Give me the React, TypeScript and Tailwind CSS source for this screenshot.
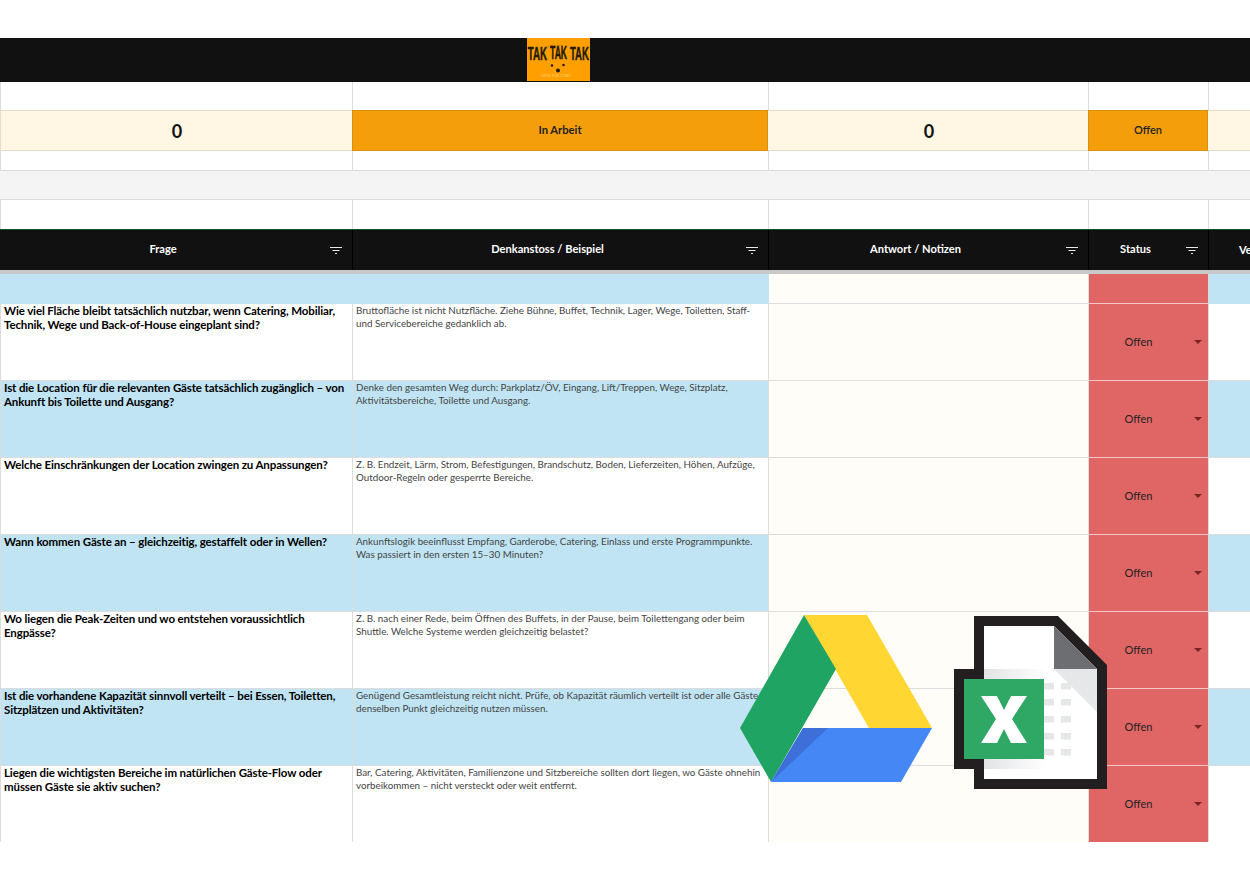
const rows = [
  ["Wie viel Fläche bleibt tatsächlich nutzbar, wenn Catering, Mobiliar, Technik, Wege und Back-of-House eingeplant sind?", "Bruttofläche ist nicht Nutzfläche. Ziehe Bühne, Buffet, Technik, Lager, Wege, Toiletten, Staff- und Servicebereiche gedanklich ab."],
  ["Ist die Location für die relevanten Gäste tatsächlich zugänglich – von Ankunft bis Toilette und Ausgang?", "Denke den gesamten Weg durch: Parkplatz/ÖV, Eingang, Lift/Treppen, Wege, Sitzplatz, Aktivitätsbereiche, Toilette und Ausgang."],
  ["Welche Einschränkungen der Location zwingen zu Anpassungen?", "Z. B. Endzeit, Lärm, Strom, Befestigungen, Brandschutz, Boden, Lieferzeiten, Höhen, Aufzüge, Outdoor-Regeln oder gesperrte Bereiche."],
  ["Wann kommen Gäste an – gleichzeitig, gestaffelt oder in Wellen?", "Ankunftslogik beeinflusst Empfang, Garderobe, Catering, Einlass und erste Programmpunkte. Was passiert in den ersten 15–30 Minuten?"],
  ["Wo liegen die Peak-Zeiten und wo entstehen voraussichtlich Engpässe?", "Z. B. nach einer Rede, beim Öffnen des Buffets, in der Pause, beim Toilettengang oder beim Shuttle. Welche Systeme werden gleichzeitig belastet?"],
  ["Ist die vorhandene Kapazität sinnvoll verteilt – bei Essen, Toiletten, Sitzplätzen und Aktivitäten?", "Genügend Gesamtleistung reicht nicht. Prüfe, ob Kapazität räumlich verteilt ist oder alle Gäste denselben Punkt gleichzeitig nutzen müssen."],
  ["Liegen die wichtigsten Bereiche im natürlichen Gäste-Flow oder müssen Gäste sie aktiv suchen?", "Bar, Catering, Aktivitäten, Familienzone und Sitzbereiche sollten dort liegen, wo Gäste ohnehin vorbeikommen – nicht versteckt oder weit entfernt."],
];

const cols = "grid grid-cols-[353px_416px_320px_120px_120px]";

function Blank({ h }: { h: string }) {
  return (
    <div className={`${cols} ${h}`}>
      <div className="border-r border-l border-[#dcdcdc]" />
      <div className="border-r border-[#dcdcdc]" />
      <div className="border-r border-[#dcdcdc]" />
      <div className="border-r border-[#dcdcdc]" />
      <div />
    </div>
  );
}

function FilterIcon() {
  return (
    <svg width="12" height="9" viewBox="0 0 12 9" className="absolute top-[16px] right-[10px]">
      <rect x="0" y="1" width="12" height="1" fill="#e8e8e8" />
      <rect x="2.5" y="4" width="7" height="1" fill="#e8e8e8" />
      <rect x="5" y="7" width="2" height="1" fill="#e8e8e8" />
    </svg>
  );
}

function Head({ label }: { label: string }) {
  return (
    <div className="relative flex items-center justify-center border-r border-black pr-[26px] pb-[2px] text-[11.1px] font-bold text-white">
      {label}
      <FilterIcon />
    </div>
  );
}

function Status() {
  return (
    <div className="relative flex items-center justify-center border-r border-b border-r-[#dcdcdc] border-b-[#f0c8c8] bg-[#e06666] pr-[20px] text-[11px] text-[#222]">
      Offen
      <span className="absolute top-[36px] right-[6px] h-0 w-0 border-x-[4px] border-t-[4px] border-x-transparent border-t-[#7a2525]" />
    </div>
  );
}

function Logo() {
  return (
    <svg viewBox="0 0 63 43" className="h-[43px] w-[63px] bg-[#ffa000]">
      <g fill="#231a00" stroke="#231a00" strokeWidth="0.5" fontFamily="'Liberation Sans', sans-serif" fontWeight="700" fontSize="18">
        <text transform="translate(0.7 22) scale(0.54 1)">TAK</text>
        <text transform="translate(23 20.5) scale(0.48 1)">TAK</text>
        <text transform="translate(43 22) scale(0.53 1)">TAK</text>
      </g>
      <text x="21" y="7.5" fontSize="2.4" fill="#6b4a00" fontFamily="'Liberation Sans', sans-serif">TAK TAK TAK</text>
      <circle cx="25" cy="27.5" r="1.3" fill="#231a00" />
      <circle cx="36.5" cy="27" r="1.3" fill="#231a00" />
      <circle cx="31" cy="32.5" r="2" fill="#231a00" />
      <text x="14" y="39" fontSize="3" fill="#ffd27a" fontFamily="'Liberation Sans', sans-serif">SWING PLAY ZONES</text>
    </svg>
  );
}

function DriveIcon() {
  return (
    <svg viewBox="0 0 192 168" className="h-[168px] w-[192px]">
      <polygon points="64,0 127,0 192,113 129,113" fill="#ffd632" />
      <polygon points="64,0 96,54 31,167 0,113" fill="#20a464" />
      <polygon points="63,113 192,113 161,167 31,167" fill="#4587f4" />
      <polygon points="63,113 88,113 31,167" fill="#3e6fd8" />
    </svg>
  );
}

function ExcelIcon() {
  return (
    <svg viewBox="0 0 154 174" className="h-[174px] w-[154px]">
      <defs>
        <linearGradient id="shade" x1="0" x2="1" y1="0" y2="0">
          <stop offset="0" stopColor="#e2e3e5" />
          <stop offset="1" stopColor="#ffffff" />
        </linearGradient>
      </defs>
      <polygon points="20,0 104,0 153,49 153,173 20,173 20,153 0,153 0,53 20,53" fill="#231f20" />
      <polygon points="30,10 100,10 143,53 143,163 30,163" fill="#ffffff" />
      <polygon points="100,10 143,53 100,53" fill="#6d6e71" />
      <polygon points="100,53 143,53 143,96" fill="#e6e7e9" />
      <rect x="30" y="53" width="62" height="10" fill="url(#shade)" />
      <rect x="30" y="143" width="62" height="10" fill="url(#shade)" />
      {[67, 83, 100, 117, 133].map((y) => (
        <g key={y} fill="#e6e7e9">
          <rect x="90" y={y} width="10" height="6.5" />
          <rect x="107" y={y} width="10" height="6.5" />
        </g>
      ))}
      <rect x="10" y="63" width="80" height="80" fill="#2fa866" />
      <polygon points="27,80 43,80 50,94 57,80 73,80 58,103 73,127 57,127 50,113 43,127 27,127 42,103" fill="#ffffff" />
    </svg>
  );
}

export default function App() {
  return (
    <div className="h-[880px] w-[1250px] overflow-hidden bg-white pt-[38px] font-['Lato','Carlito',sans-serif]">
      <div className="relative h-[804px] overflow-hidden">
        <div className="flex h-[44px] bg-[#111111] pl-[527px]">
          <Logo />
        </div>
        <Blank h="h-[28px]" />
        <div className={`${cols} h-[41px] border-y border-[#e8dcc8] bg-[#fff6e3]`}>
          <div className="flex items-center justify-center border-l border-[#e8dcc8] pt-[2px] text-[18px] font-bold text-[#111]">0</div>
          <div className="my-[-1px] mr-[1px] ml-[-1px] flex items-center justify-center border border-[#d9900a] bg-[#f59e0b] text-[11.2px] font-bold text-[#222]">In Arbeit</div>
          <div className="flex items-center justify-center pt-[2px] text-[18px] font-bold text-[#111]">0</div>
          <div className="my-[-1px] mr-[1px] ml-[-1px] flex items-center justify-center border border-[#d9900a] bg-[#f59e0b] text-[11px] font-semibold text-[#222]">Offen</div>
          <div />
        </div>
        <Blank h="h-[19px]" />
        <div className="h-[30px] border-y border-[#dcdcdc] bg-[#f4f4f4]" />
        <Blank h="h-[29px]" />
        <div className={`${cols} h-[41px] border-t border-[#14532d] bg-[#111111]`}>
          <Head label="Frage" />
          <Head label="Denkanstoss / Beispiel" />
          <Head label="Antwort / Notizen" />
          <Head label="Status" />
          <div className="pt-[12px] pl-[30px] text-[11.1px] font-bold whitespace-nowrap text-white">Verantwortlich</div>
        </div>
        <div className="h-[4px] bg-[#c8c8c8]" />
        <div className={`${cols} h-[30px]`}>
          <div className="col-span-2 bg-[#c0e4f3]" />
          <div className="border-r border-b border-[#dcdcdc] bg-[#fffdf7]" />
          <div className="border-r border-b border-r-[#dcdcdc] border-b-[#f0c8c8] bg-[#e06666]" />
          <div className="bg-[#c0e4f3]" />
        </div>
        {rows.map(([q, d], i) => {
          const blue = i % 2 === 1;
          return (
            <div key={q} className={`${cols} h-[77px] ${blue ? "bg-[#c0e4f3]" : "bg-white"}`}>
              <div className="border-r border-b border-l border-[#dcdcdc] px-[3px] text-[11.5px] leading-[14px] font-bold tracking-[-0.12px] text-black">{q}</div>
              <div className="border-r border-b border-[#dcdcdc] pr-[1px] pl-[3px] text-[9.8px] leading-[13px] text-[#444]">{d}</div>
              <div className="border-r border-b border-[#dcdcdc] bg-[#fffdf7]" />
              <Status />
              <div className="border-b border-[#dcdcdc]" />
            </div>
          );
        })}
        <div className="absolute top-[577px] left-[740px]"><DriveIcon /></div>
        <div className="absolute top-[578px] left-[954px]"><ExcelIcon /></div>
      </div>
    </div>
  );
}
